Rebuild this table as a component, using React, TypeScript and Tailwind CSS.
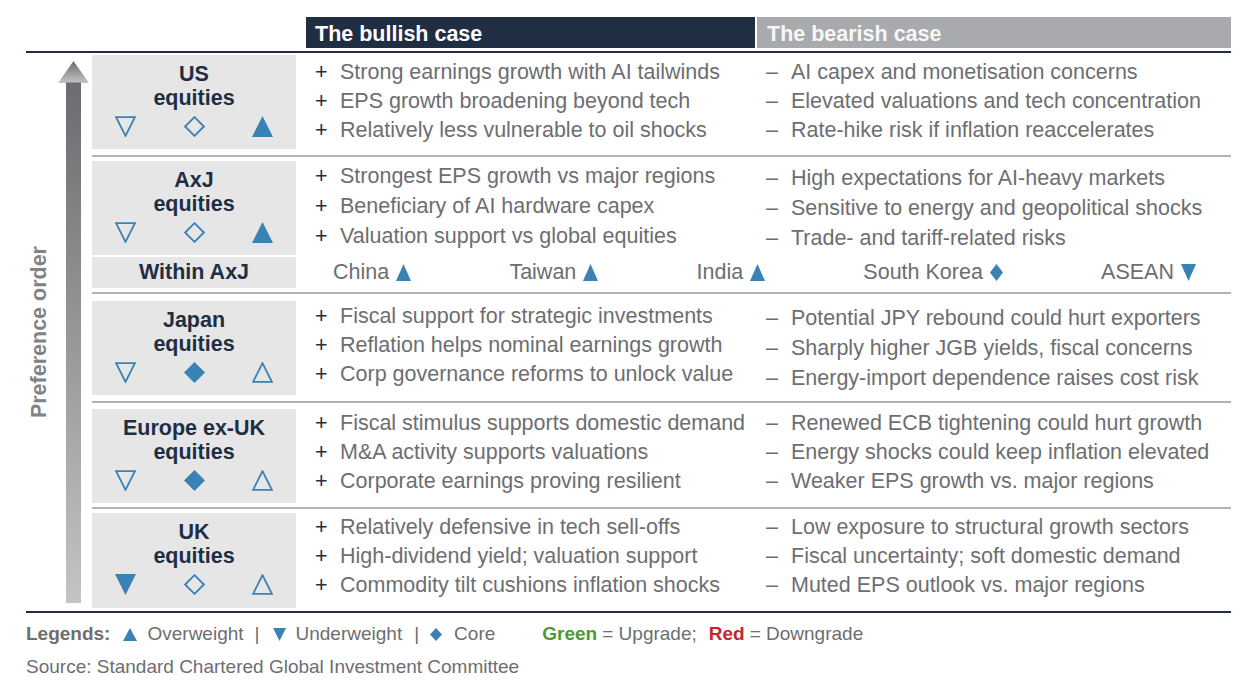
import React from "react";

const BLUE = "#3a82b3";

type IconKind = "upF" | "upO" | "downF" | "downO" | "diaF" | "diaO";

function Icon({ kind, w = 21, h = 21 }: { kind: IconKind; w?: number; h?: number }) {
  const s = 1.8;
  let el: React.ReactNode = null;
  const fill = kind.endsWith("F");
  const common = fill
    ? { fill: BLUE }
    : { fill: "none", stroke: BLUE, strokeWidth: s, strokeLinejoin: "miter" as const };
  const p = fill ? 0 : s / 2 + 0.2;
  if (kind.startsWith("up")) {
    el = <polygon points={`${w / 2},${p} ${w - p},${h - p} ${p},${h - p}`} {...common} />;
  } else if (kind.startsWith("down")) {
    el = <polygon points={`${p},${p} ${w - p},${p} ${w / 2},${h - p}`} {...common} />;
  } else {
    el = (
      <polygon
        points={`${w / 2},${p} ${w - p},${h / 2} ${w / 2},${h - p} ${p},${h / 2}`}
        {...common}
      />
    );
  }
  return (
    <svg width={w} height={h} viewBox={`0 0 ${w} ${h}`} className="block shrink-0">
      {el}
    </svg>
  );
}

type Section = {
  title: string[];
  icons: [IconKind, IconKind, IconKind];
  bull: string[];
  bear: string[];
  boxMt: string;
  boxH: string;
  bullPt: string;
  bearPt: string;
  bullLh: string;
  bearLh: string;
};

function Label({ s }: { s: Section }) {
  return (
    <div className="w-[204px] shrink-0 bg-[#e6e6e6] flex flex-col items-center pt-[7px]">
      {s.title.map((t) => (
        <div key={t} className="text-[21.5px] leading-[24px] font-bold text-[#1f2e43] text-center">
          {t}
        </div>
      ))}
      <div className="mt-[6px] w-full flex justify-between px-[23px]">
        <Icon kind={s.icons[0]} />
        <Icon kind={s.icons[1]} />
        <Icon kind={s.icons[2]} />
      </div>
    </div>
  );
}

function Bullets({ items, sign, pt, lh, signColor }: { items: string[]; sign: string; pt: string; lh: string; signColor: string }) {
  return (
    <div className={`flex flex-col ${pt}`}>
      {items.map((t) => (
        <div key={t} className={`flex ${lh} whitespace-nowrap`}>
          <span className={`w-[25px] shrink-0 ${signColor}`}>{sign}</span>
          <span className="text-[#6d6e71]">{t}</span>
        </div>
      ))}
    </div>
  );
}

function SectionRow({ s }: { s: Section }) {
  return (
    <div className={`flex ${s.boxMt} ${s.boxH} text-[21.5px]`}>
      <Label s={s} />
      <div className="w-[10px] shrink-0" />
      <div className="w-[451px] shrink-0 pl-[9px]">
        <Bullets items={s.bull} sign="+" pt={s.bullPt} lh={s.bullLh} signColor="text-[#1f2e43]" />
      </div>
      <div className="flex-1 pl-[9px]">
        <Bullets items={s.bear} sign="–" pt={s.bearPt} lh={s.bearLh} signColor="text-[#6d6e71]" />
      </div>
    </div>
  );
}

const US: Section = {
  title: ["US", "equities"],
  icons: ["downO", "diaO", "upF"],
  bull: [
    "Strong earnings growth with AI tailwinds",
    "EPS growth broadening beyond tech",
    "Relatively less vulnerable to oil shocks",
  ],
  bear: [
    "AI capex and monetisation concerns",
    "Elevated valuations and tech concentration",
    "Rate-hike risk if inflation reaccelerates",
  ],
  boxMt: "mt-[2px]",
  boxH: "h-[94px]",
  bullPt: "pt-[3px]",
  bearPt: "pt-[3px]",
  bullLh: "h-[29px] leading-[29px]",
  bearLh: "h-[29px] leading-[29px]",
};

const AXJ: Section = {
  title: ["AxJ", "equities"],
  icons: ["downO", "diaO", "upF"],
  bull: [
    "Strongest EPS growth vs major regions",
    "Beneficiary of AI hardware capex",
    "Valuation support vs global equities",
  ],
  bear: [
    "High expectations for AI-heavy markets",
    "Sensitive to energy and geopolitical shocks",
    "Trade- and tariff-related risks",
  ],
  boxMt: "mt-[4px]",
  boxH: "h-[94px]",
  bullPt: "pt-[0px]",
  bearPt: "pt-[2px]",
  bullLh: "h-[30px] leading-[30px]",
  bearLh: "h-[30px] leading-[30px]",
};

const JAPAN: Section = {
  title: ["Japan", "equities"],
  icons: ["downO", "diaF", "upO"],
  bull: [
    "Fiscal support for strategic investments",
    "Reflation helps nominal earnings growth",
    "Corp governance reforms to unlock value",
  ],
  bear: [
    "Potential JPY rebound could hurt exporters",
    "Sharply higher JGB yields, fiscal concerns",
    "Energy-import dependence raises cost risk",
  ],
  boxMt: "mt-[7px]",
  boxH: "h-[94px]",
  bullPt: "pt-[1px]",
  bearPt: "pt-[2px]",
  bullLh: "h-[29px] leading-[29px]",
  bearLh: "h-[30px] leading-[30px]",
};

const EUROPE: Section = {
  title: ["Europe ex-UK", "equities"],
  icons: ["downO", "diaF", "upO"],
  bull: [
    "Fiscal stimulus supports domestic demand",
    "M&A activity supports valuations",
    "Corporate earnings proving resilient",
  ],
  bear: [
    "Renewed ECB tightening could hurt growth",
    "Energy shocks could keep inflation elevated",
    "Weaker EPS growth vs. major regions",
  ],
  boxMt: "mt-[6px]",
  boxH: "h-[94px]",
  bullPt: "pt-[0px]",
  bearPt: "pt-[0px]",
  bullLh: "h-[29px] leading-[29px]",
  bearLh: "h-[29px] leading-[29px]",
};

const UK: Section = {
  title: ["UK", "equities"],
  icons: ["downF", "diaO", "upO"],
  bull: [
    "Relatively defensive in tech sell-offs",
    "High-dividend yield; valuation support",
    "Commodity tilt cushions inflation shocks",
  ],
  bear: [
    "Low exposure to structural growth sectors",
    "Fiscal uncertainty; soft domestic demand",
    "Muted EPS outlook vs. major regions",
  ],
  boxMt: "mt-[4px]",
  boxH: "h-[95px]",
  bullPt: "pt-[0px]",
  bearPt: "pt-[0px]",
  bullLh: "h-[29px] leading-[29px]",
  bearLh: "h-[29px] leading-[29px]",
};

function Sep({ mt }: { mt: string }) {
  return <div className={`${mt} h-[2px] bg-[#b1b3b6]`} />;
}

function WithinItem({ name, kind }: { name: string; kind: IconKind }) {
  return (
    <div className="flex items-center">
      <span className="text-[#6d6e71]">{name}</span>
      <span className="ml-[7px]">
        <Icon kind={kind} w={kind.startsWith("dia") ? 13 : 15} h={17} />
      </span>
    </div>
  );
}

function Arrow() {
  return (
    <svg width="31" height="542" viewBox="0 0 31 542" className="block">
      <defs>
        <linearGradient id="ag" x1="0" y1="0" x2="0" y2="1">
          <stop offset="0" stopColor="#6b6c6f" />
          <stop offset="1" stopColor="#c4c4c4" />
        </linearGradient>
      </defs>
      <polygon points="15.5,0 31,22 0,22" fill="url(#ag)" />
      <rect x="8" y="21.5" width="15" height="520.5" fill="url(#ag)" />
    </svg>
  );
}

export default function App() {
  return (
    <div className="w-[1246px] h-[696px] bg-white font-['Liberation_Sans',Arial,sans-serif] pl-[26px] pt-[17px] overflow-hidden">
      <div className="w-[1205px]">
        {/* header */}
        <div className="flex h-[31px]">
          <div className="w-[280px] shrink-0" />
          <div className="w-[449px] shrink-0 bg-[#1f2e43] text-white font-bold text-[21.5px] pl-[9px] pt-[3px] flex items-center">
            The bullish case
          </div>
          <div className="w-[2px] shrink-0" />
          <div className="flex-1 bg-[#a8aaad] text-[#f7f7f7] font-bold text-[21.5px] pl-[10px] pt-[3px] flex items-center">
            The bearish case
          </div>
        </div>
        <div className="mt-[3px] h-[2px] bg-[#1f2e43]" />

        {/* body */}
        <div className="flex h-[558px]">
          <div className="w-[66px] shrink-0 flex items-center">
            <div className="w-[26px] flex justify-center">
              <div className="[writing-mode:vertical-rl] rotate-180 text-[21.5px] font-bold text-[#808285] leading-[20px] whitespace-nowrap">
                Preference order
              </div>
            </div>
            <div className="ml-[6px]">
              <Arrow />
            </div>
          </div>
          <div className="flex-1 flex flex-col">
            <SectionRow s={US} />
            <Sep mt="mt-[6px]" />
            <SectionRow s={AXJ} />
            <div className="flex mt-[2px] h-[31px] text-[21.5px]">
              <div className="w-[204px] shrink-0 bg-[#e6e6e6] flex items-center justify-center font-bold text-[#1f2e43]">
                Within AxJ
              </div>
              <div className="w-[10px] shrink-0" />
              <div className="flex-1 flex items-center justify-between pl-[27px] pr-[35px]">
                <WithinItem name="China" kind="upF" />
                <WithinItem name="Taiwan" kind="upF" />
                <WithinItem name="India" kind="upF" />
                <WithinItem name="South Korea" kind="diaF" />
                <WithinItem name="ASEAN" kind="downF" />
              </div>
            </div>
            <Sep mt="mt-[4px]" />
            <SectionRow s={JAPAN} />
            <Sep mt="mt-[6px]" />
            <SectionRow s={EUROPE} />
            <Sep mt="mt-[4px]" />
            <SectionRow s={UK} />
          </div>
        </div>
        <div className="h-[2px] bg-[#1f2e43]" />

        {/* legend */}
        <div className="mt-[10px] flex items-center h-[22px] text-[19px] text-[#6d6e71] whitespace-nowrap">
          <span className="font-bold">Legends:</span>
          <span className="ml-[13px]"><Icon kind="upF" w={14} h={13} /></span>
          <span className="ml-[10px]">Overweight</span>
          <span className="ml-[11px]">|</span>
          <span className="ml-[13px]"><Icon kind="downF" w={13} h={13} /></span>
          <span className="ml-[10px]">Underweight</span>
          <span className="ml-[12px]">|</span>
          <span className="ml-[11px]"><Icon kind="diaF" w={12} h={13} /></span>
          <span className="ml-[12px]">Core</span>
          <span className="ml-[47px] font-bold text-[#4b9a2f]">Green</span>
          <span className="ml-[5px]">= Upgrade;</span>
          <span className="ml-[12px] font-bold text-[#c4262e]">Red</span>
          <span className="ml-[5px]">= Downgrade</span>
        </div>
        <div className="mt-[11px] h-[22px] leading-[22px] text-[19px] text-[#6d6e71] whitespace-nowrap">
          Source: Standard Chartered Global Investment Committee
        </div>
      </div>
    </div>
  );
}
